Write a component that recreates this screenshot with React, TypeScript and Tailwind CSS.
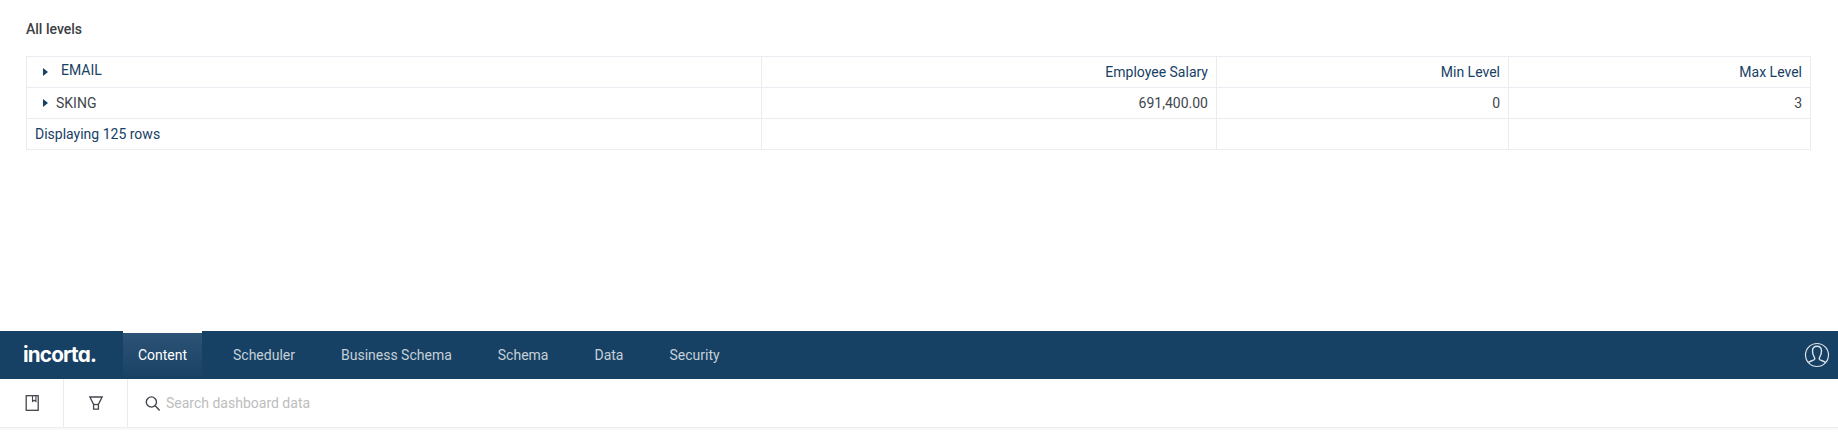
import React from "react";

const NAV = ["Content", "Scheduler", "Business Schema", "Schema", "Data", "Security"];

function Arrow() {
  return (
    <svg width="5" height="8" viewBox="0 0 5 8" className="shrink-0">
      <path d="M0 0L5 4L0 8Z" fill="#174164" />
    </svg>
  );
}

function Logo() {
  return (
    <svg width="84" height="30" viewBox="0 0 84 30" role="img" aria-label="incorta.">
      <text
        x="-1"
        y="22"
        textLength="73"
        lengthAdjust="spacingAndGlyphs"
        fill="#fff"
        className="font-['Inter',sans-serif] text-[20.5px] font-bold tracking-[-0.8px] [font-feature-settings:'cv11']"
      >
        incorta.
      </text>
    </svg>
  );
}

function Cell({ children }: { children?: React.ReactNode }) {
  return <div className="flex items-center justify-end border-r border-b border-[#ebecf1] px-[8px]">{children}</div>;
}

export default function App() {
  return (
    <div className="h-[448px] w-[1838px] overflow-hidden bg-white font-['Roboto',sans-serif] text-[14px] leading-[20px] text-[#42464d]">
      <section className="h-[331px] px-[26px] pt-[19px]">
        <h2 className="mb-[17px] font-medium text-[#3b3e44]">All levels</h2>
        <div className="grid w-[1785px] grid-cols-[735px_455px_292px_302px] grid-rows-[31px_31px_31px] border-t border-l border-[#ebecf1]">
          <div className="flex items-center border-r border-b border-[#ebecf1] pl-[16px] text-[#174164]">
            <Arrow />
            <span className="-mt-[4px] ml-[13px]">EMAIL</span>
          </div>
          <Cell><span className="text-[#174164]">Employee Salary</span></Cell>
          <Cell><span className="text-[#174164]">Min Level</span></Cell>
          <Cell><span className="text-[#174164]">Max Level</span></Cell>
          <div className="flex items-center border-r border-b border-[#ebecf1] pl-[16px]">
            <Arrow />
            <span className="ml-[8px]">SKING</span>
          </div>
          <Cell>691,400.00</Cell>
          <Cell>0</Cell>
          <Cell>3</Cell>
          <div className="flex items-center border-r border-b border-[#ebecf1] pl-[8px] text-[#174164]">Displaying 125 rows</div>
          <Cell />
          <Cell />
          <Cell />
        </div>
      </section>

      <header className="flex h-[48px] items-stretch bg-[#174164] pr-[8px]">
        <div className="flex w-[123px] items-center pl-[24px]">
          <Logo />
        </div>
        <nav className="flex gap-[16px]">
          {NAV.map((item, i) => (
            <div
              key={item}
              className={
                i === 0
                  ? "flex w-[79px] items-center justify-center border-t-2 border-white bg-linear-to-b from-[#2d5375] to-[#174164] pb-[2px] text-white"
                  : "flex items-center px-[15px] text-[#c5d0d8]"
              }
            >
              {item}
            </div>
          ))}
        </nav>
        <div className="ml-auto flex items-center">
          <svg width="26" height="26" viewBox="0 0 26 26" fill="none" stroke="#dce3e9">
            <circle cx="13" cy="13" r="11.5" strokeWidth="1.2" />
            <path d="M4.5 20.5C6 18.5 10.5 18.8 10.8 16.8C10.8 14.8 8.5 13.5 8.5 9C8.5 5.8 10.2 4.2 13 4.2S17.5 5.8 17.5 9C17.5 13.5 15.2 14.8 15.2 16.8C15.5 18.8 20 18.5 21.5 20.5" strokeWidth="1.4" />
          </svg>
        </div>
      </header>

      <div className="flex h-[49px] border-b border-[#eeeeee] shadow-[0_1px_2px_rgba(0,0,0,0.05)]">
        <div className="flex w-[64px] items-center justify-center border-r border-[#ebebeb] pl-px">
          <svg width="14" height="16" viewBox="0 0 14 16" fill="none" stroke="#42464d">
            <rect x="1.2" y="0.7" width="12" height="14.6" strokeWidth="1.3" />
            <path d="M7.5 1V6.5L9.2 5.2L10.9 6.5V1" strokeWidth="1.1" />
          </svg>
        </div>
        <div className="flex w-[64px] items-center justify-center border-r border-[#ebebeb] pl-px">
          <svg width="14" height="14" viewBox="0 0 14 14" fill="none" stroke="#42464d" strokeWidth="1.3">
            <path d="M0.9 1H13.1L9.4 8.5V13.2H4.6V8.5Z" />
            <path d="M4.6 8.5H9.4" />
          </svg>
        </div>
        <div className="flex items-center pl-[17px] text-[#bdbdbd]">
          <svg width="15" height="15" viewBox="0 0 15 15" fill="none" stroke="#42464d" strokeWidth="1.4">
            <circle cx="6.4" cy="6" r="5.1" />
            <path d="M10 9.6L14.6 14.4" />
          </svg>
          <span className="ml-[6px]">Search dashboard data</span>
        </div>
      </div>
    </div>
  );
}
